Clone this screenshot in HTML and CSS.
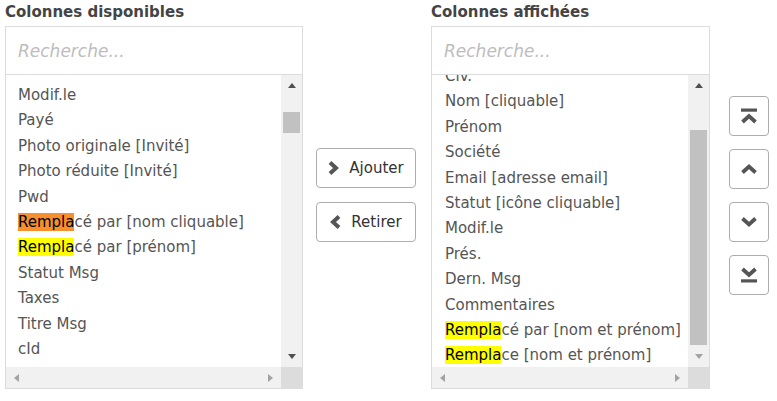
FILE: index.html
```html
<!DOCTYPE html>
<html lang="fr">
<head>
<meta charset="utf-8">
<title>Colonnes</title>
<link rel="stylesheet" href="styles.css">
</head>
<body>
<div class="app">
  <section class="col col-left">
    <h2 class="title">Colonnes disponibles</h2>
    <div class="panel">
      <div class="search">Recherche...</div>
      <div class="body">
        <div class="viewport">
          <ul class="list">
            <li class="item">Modif.le</li>
            <li class="item">Payé</li>
            <li class="item">Photo originale [Invité]</li>
            <li class="item">Photo réduite [Invité]</li>
            <li class="item">Pwd</li>
            <li class="item"><span class="hl hl-orange">Rempla</span>cé par [nom cliquable]</li>
            <li class="item"><span class="hl hl-yellow">Rempla</span>cé par [prénom]</li>
            <li class="item">Statut Msg</li>
            <li class="item">Taxes</li>
            <li class="item">Titre Msg</li>
            <li class="item">cId</li>
          </ul>
        </div>
        <div class="vscroll">
          <div class="sb-btn"><span class="tri tri-up"></span></div>
          <div class="track"><div class="thumb thumb-left"></div></div>
          <div class="sb-btn"><span class="tri tri-down"></span></div>
        </div>
      </div>
      <div class="hscroll">
        <div class="sb-btn"><span class="tri tri-left off"></span></div>
        <div class="hs-track"></div>
        <div class="sb-btn"><span class="tri tri-right off"></span></div>
        <div class="corner"></div>
      </div>
    </div>
  </section>

  <div class="mid">
    <button class="btn" type="button">
      <svg class="chev" width="11" height="14" viewBox="0 0 11 14"><path d="M2 1.5 L8 7 L2 12.5" fill="none" stroke="#555" stroke-width="4"/></svg>
      <span>Ajouter</span>
    </button>
    <button class="btn" type="button">
      <svg class="chev" width="11" height="14" viewBox="0 0 11 14"><path d="M9 1.5 L3 7 L9 12.5" fill="none" stroke="#555" stroke-width="4"/></svg>
      <span>Retirer</span>
    </button>
  </div>

  <section class="col col-right">
    <h2 class="title">Colonnes affichées</h2>
    <div class="panel">
      <div class="search">Recherche...</div>
      <div class="body">
        <div class="viewport">
          <ul class="list list-scrolled">
            <li class="item">Civ.</li>
            <li class="item">Nom [cliquable]</li>
            <li class="item">Prénom</li>
            <li class="item">Société</li>
            <li class="item">Email [adresse email]</li>
            <li class="item">Statut [icône cliquable]</li>
            <li class="item">Modif.le</li>
            <li class="item">Prés.</li>
            <li class="item">Dern. Msg</li>
            <li class="item">Commentaires</li>
            <li class="item"><span class="hl hl-yellow">Rempla</span>cé par [nom et prénom]</li>
            <li class="item"><span class="hl hl-yellow">Rempla</span>ce [nom et prénom]</li>
          </ul>
        </div>
        <div class="vscroll">
          <div class="sb-btn"><span class="tri tri-up"></span></div>
          <div class="track"><div class="thumb thumb-right"></div></div>
          <div class="sb-btn"><span class="tri tri-down off"></span></div>
        </div>
      </div>
      <div class="hscroll">
        <div class="sb-btn"><span class="tri tri-left off"></span></div>
        <div class="hs-track"></div>
        <div class="sb-btn"><span class="tri tri-right off"></span></div>
        <div class="corner"></div>
      </div>
    </div>
  </section>

  <div class="order">
    <button class="obtn" type="button" aria-label="Premier">
      <svg width="18" height="16" viewBox="0 0 18 16"><rect x="1" y="0.5" width="16" height="3.2" fill="#555"/><path d="M2.5 14 L9 8 L15.5 14" fill="none" stroke="#555" stroke-width="3.8"/></svg>
    </button>
    <button class="obtn" type="button" aria-label="Monter">
      <svg width="18" height="16" viewBox="0 0 18 16"><path d="M2.5 11.5 L9 5.5 L15.5 11.5" fill="none" stroke="#555" stroke-width="3.8"/></svg>
    </button>
    <button class="obtn" type="button" aria-label="Descendre">
      <svg width="18" height="16" viewBox="0 0 18 16"><path d="M2.5 4.5 L9 10.5 L15.5 4.5" fill="none" stroke="#555" stroke-width="3.8"/></svg>
    </button>
    <button class="obtn" type="button" aria-label="Dernier">
      <svg width="18" height="16" viewBox="0 0 18 16"><path d="M2.5 2 L9 8 L15.5 2" fill="none" stroke="#555" stroke-width="3.8"/><rect x="1" y="12.3" width="16" height="3.2" fill="#555"/></svg>
    </button>
  </div>
</div>
</body>
</html>
```

FILE: styles.css
```css
* { box-sizing: border-box; }

body {
  margin: 0;
  background: #fff;
  font-family: "DejaVu Sans", Verdana, sans-serif;
}

.app {
  display: flex;
  align-items: flex-start;
  padding: 2px 0 0 5px;
}

.col-left { width: 298px; }
.col-right { width: 279px; margin-left: 15px; }

.title {
  margin: 0 0 4px;
  font-size: 15px;
  line-height: 20px;
  font-weight: bold;
  color: #444;
}

.panel {
  border: 1px solid #dcdcdc;
}

.search {
  height: 48px;
  padding: 2px 0 0 12px;
  line-height: 45px;
  font-size: 17px;
  font-style: italic;
  color: #bdbdbd;
  border-bottom: 1px solid #dcdcdc;
}

.body {
  display: flex;
  height: 292px;
}

.viewport {
  flex: 1;
  overflow: hidden;
}

.list {
  list-style: none;
  margin: 0;
  padding: 8px 0 0 12px;
}

.list-scrolled { margin-top: -19px; padding-left: 13px; }

.item {
  height: 25.4px;
  line-height: 25.4px;
  font-size: 15px;
  color: #555;
  white-space: nowrap;
}

.hl { color: #000; }
.hl-orange { background: #f78f2e; }
.hl-yellow { background: #ffff00; }

.vscroll {
  width: 21px;
  background: #f1f1f1;
  display: flex;
  flex-direction: column;
}

.sb-btn {
  width: 21px;
  height: 21px;
  flex: none;
  display: flex;
  align-items: center;
  justify-content: center;
}

.track { flex: 1; }

.thumb {
  background: #c1c1c1;
  margin: 0 2px;
}

.thumb-left { margin-top: 16px; height: 21px; }
.thumb-right { margin-top: 34px; height: 215px; }

.hscroll {
  display: flex;
  height: 21px;
  background: #f1f1f1;
}

.hs-track { flex: 1; }

.corner {
  width: 21px;
  background: #dcdcdc;
}

.tri { width: 0; height: 0; display: block; }
.tri-up {
  border-left: 4.5px solid transparent;
  border-right: 4.5px solid transparent;
  border-bottom: 5px solid #505050;
}
.tri-down {
  border-left: 4.5px solid transparent;
  border-right: 4.5px solid transparent;
  border-top: 5px solid #505050;
}
.tri-left {
  border-top: 4.5px solid transparent;
  border-bottom: 4.5px solid transparent;
  border-right: 5px solid #505050;
}
.tri-right {
  border-top: 4.5px solid transparent;
  border-bottom: 4.5px solid transparent;
  border-left: 5px solid #505050;
}
.tri-down.off { border-top-color: #a3a3a3; }
.tri-up.off { border-bottom-color: #a3a3a3; }
.tri-left.off { border-right-color: #a3a3a3; }
.tri-right.off { border-left-color: #a3a3a3; }

.mid {
  width: 100px;
  margin: 146px 0 0 13px;
  display: flex;
  flex-direction: column;
  gap: 14px;
}

.btn {
  height: 40px;
  padding: 0;
  border: 1px solid #adadad;
  border-radius: 4px;
  background: #fff;
  display: flex;
  align-items: center;
  justify-content: center;
  gap: 10px;
  font-family: "DejaVu Sans", Verdana, sans-serif;
  font-size: 15px;
  color: #333;
}

.chev { display: block; }

.order {
  width: 40px;
  margin: 94px 0 0 19px;
  display: flex;
  flex-direction: column;
  gap: 13px;
}

.obtn {
  width: 40px;
  height: 40px;
  padding: 0;
  border: 1px solid #adadad;
  border-radius: 4px;
  background: #fff;
  display: flex;
  align-items: center;
  justify-content: center;
}

.obtn svg { display: block; }
```
